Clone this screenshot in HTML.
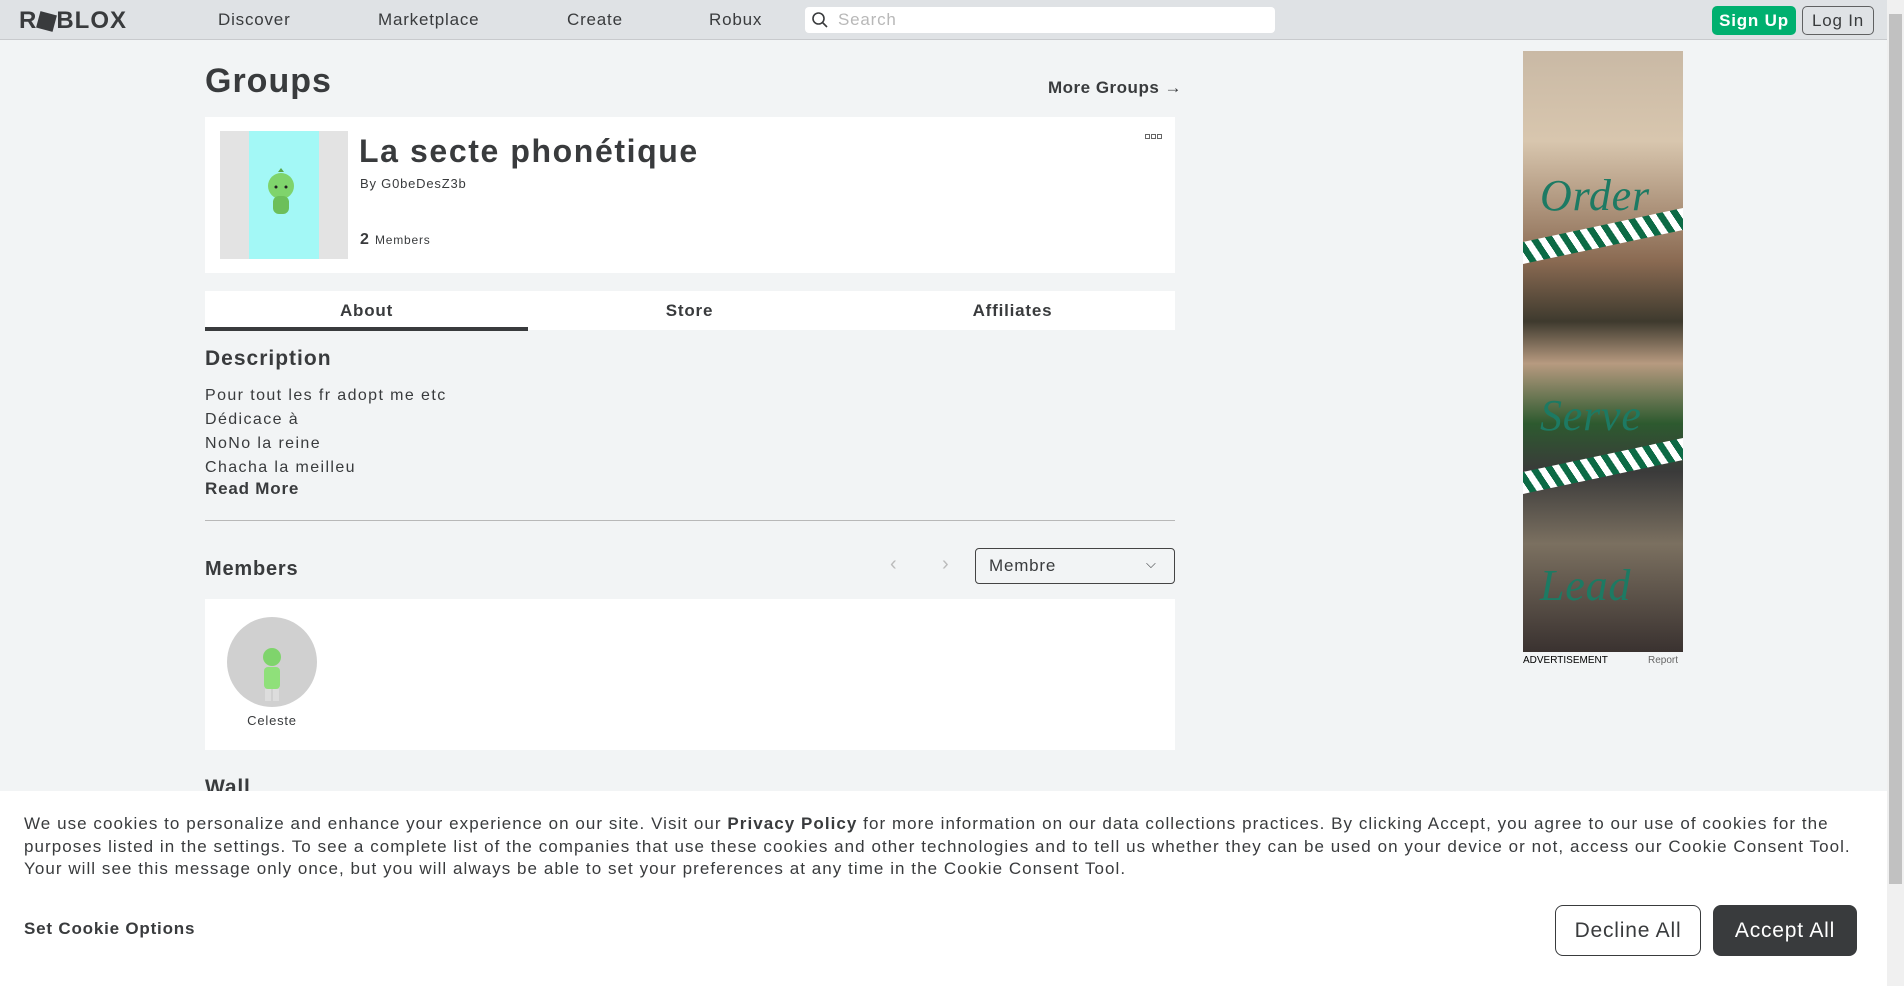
<!DOCTYPE html>
<html><head><meta charset="utf-8"><style>
*{box-sizing:border-box;margin:0;padding:0}
body{width:1904px;height:986px;overflow:hidden;background:#f2f4f5;font-family:"Liberation Sans",sans-serif;color:#393b3d;position:relative;letter-spacing:0.8px}
.a{position:absolute}
.hdr{left:0;top:0;width:1887px;height:40px;background:#dfe2e5;border-bottom:1px solid #c8cacd}
.nav{top:10px;font-size:17px;color:#393b3d}
.sb{left:1887px;top:0;width:17px;height:986px;background:#f0f0f0}
.card{background:#fff}
.t{white-space:nowrap}
</style></head><body>
<div class="a hdr"></div>
<div class="a t" style="left:19px;top:7px;font-size:24px;font-weight:bold;letter-spacing:1px;color:#393b3d">R<span style="display:inline-block;width:17px;height:17px;background:#393b3d;transform:rotate(15deg);vertical-align:-2px;margin:0 1px"></span>BLOX</div>
<div class="a nav t" style="left:218px">Discover</div>
<div class="a nav t" style="left:378px">Marketplace</div>
<div class="a nav t" style="left:567px">Create</div>
<div class="a nav t" style="left:709px">Robux</div>
<div class="a" style="left:805px;top:7px;width:470px;height:26px;background:#fff;border-radius:4px"></div>
<svg class="a" style="left:811px;top:11px" width="18" height="18" viewBox="0 0 18 18"><circle cx="7.5" cy="7.5" r="5.5" fill="none" stroke="#393b3d" stroke-width="1.6"/><path d="M11.5 11.5L16 16" stroke="#393b3d" stroke-width="1.6"/></svg>
<div class="a t" style="left:838px;top:10px;font-size:17px;color:#b8b8b8">Search</div>
<div class="a t" style="left:1712px;top:6px;width:84px;height:29px;background:#00b06f;border-radius:5px;color:#fff;font-size:17px;font-weight:bold;text-align:center;line-height:29px">Sign Up</div>
<div class="a t" style="left:1802px;top:6px;width:72px;height:29px;border:1px solid #606162;border-radius:5px;color:#393b3d;font-size:17px;text-align:center;line-height:27px">Log In</div>
<div class="a sb"></div>
<div class="a" style="left:1889px;top:14px;width:13px;height:870px;background:#c1c1c1"></div>

<div class="a t" style="left:205px;top:62px;font-size:34px;font-weight:bold;letter-spacing:1px">Groups</div>
<div class="a t" style="left:1048px;top:78px;font-size:17px;font-weight:bold;color:#393b3d;letter-spacing:0.5px">More Groups →</div>
<div class="a card" style="left:205px;top:117px;width:970px;height:156px"></div>
<div class="a" style="left:220px;top:131px;width:128px;height:128px;background:#e3e3e3"></div>
<div class="a" style="left:249px;top:131px;width:70px;height:128px;background:#a3f8f6"></div>
<svg class="a" style="left:262px;top:168px" width="38" height="50" viewBox="0 0 38 50"><ellipse cx="19" cy="18" rx="13" ry="13" fill="#7fd46c"/><rect x="11" y="28" width="16" height="18" rx="6" fill="#6cbf5a"/><circle cx="14" cy="19" r="1.5" fill="#222"/><circle cx="24" cy="19" r="1.5" fill="#222"/><path d="M16 4l3-4 3 4" fill="#5aa84a"/></svg>
<div class="a t" style="left:359px;top:133px;font-size:32px;font-weight:bold;letter-spacing:1.6px">La secte phonétique</div>
<div class="a t" style="left:360px;top:176px;font-size:13px">By G0beDesZ3b</div>
<div class="a t" style="left:360px;top:231px;font-size:16px;font-weight:bold">2 <span style="font-size:12px;font-weight:normal">Members</span></div>
<svg class="a" style="left:1145px;top:134px" width="18" height="6"><rect x="0.5" y="0.5" width="4" height="4" fill="none" stroke="#666"/><rect x="6.5" y="0.5" width="4" height="4" fill="none" stroke="#666"/><rect x="12.5" y="0.5" width="4" height="4" fill="none" stroke="#666"/></svg>

<div class="a card" style="left:205px;top:291px;width:970px;height:39px"></div>
<div class="a" style="left:205px;top:327px;width:323px;height:4px;background:#393b3d"></div>
<div class="a t" style="left:205px;top:301px;width:323px;text-align:center;font-size:17px;font-weight:bold">About</div>
<div class="a t" style="left:528px;top:301px;width:323px;text-align:center;font-size:17px;font-weight:bold">Store</div>
<div class="a t" style="left:851px;top:301px;width:323px;text-align:center;font-size:17px;font-weight:bold">Affiliates</div>

<div class="a t" style="left:205px;top:347px;font-size:21px;font-weight:bold;letter-spacing:1px">Description</div>
<div class="a" style="left:205px;top:384px;font-size:16px;line-height:24px;letter-spacing:1.4px">Pour tout les fr adopt me etc<br>Dédicace à<br>NoNo la reine<br>Chacha la meilleu</div>
<div class="a t" style="left:205px;top:479px;font-size:17px;font-weight:bold">Read More</div>
<div class="a" style="left:205px;top:520px;width:970px;height:1px;background:#b8b8b8"></div>

<div class="a t" style="left:205px;top:558px;font-size:20px;font-weight:bold">Members</div>
<div class="a t" style="left:890px;top:553px;font-size:20px;color:#bbb">‹</div>
<div class="a t" style="left:942px;top:553px;font-size:20px;color:#bbb">›</div>
<div class="a" style="left:975px;top:548px;width:200px;height:36px;border:1px solid #444;border-radius:4px"></div>
<div class="a t" style="left:989px;top:556px;font-size:17px">Membre</div>
<div class="a t" style="left:1146px;top:556px;font-size:13px">⌵</div>
<div class="a card" style="left:205px;top:599px;width:970px;height:151px"></div>
<div class="a" style="left:227px;top:617px;width:90px;height:90px;border-radius:50%;background:#d0d0d0"></div>
<svg class="a" style="left:255px;top:645px" width="34" height="58" viewBox="0 0 34 58"><ellipse cx="17" cy="12" rx="9" ry="9" fill="#7fd46c"/><rect x="9" y="22" width="16" height="22" rx="4" fill="#8fe07a"/><rect x="10" y="44" width="6" height="12" fill="#ddd"/><rect x="18" y="44" width="6" height="12" fill="#ddd"/></svg>
<div class="a t" style="left:227px;top:713px;width:90px;text-align:center;font-size:13px">Celeste</div>
<div class="a t" style="left:205px;top:776px;font-size:21px;font-weight:bold">Wall</div>

<div class="a" style="left:1523px;top:51px;width:160px;height:601px;background:linear-gradient(180deg,#c9b9a5 0%,#d8c6ae 15%,#8a6a52 35%,#3e3a2e 45%,#b79a80 52%,#2d5a2f 62%,#3a3a3a 70%,#7b7060 82%,#3a3230 100%)"></div>
<div class="a t" style="left:1540px;top:170px;font-size:44px;font-style:italic;color:#1d7a63;font-family:'Liberation Serif',serif">Order</div>
<div class="a t" style="left:1540px;top:390px;font-size:44px;font-style:italic;color:#1d7a63;font-family:'Liberation Serif',serif">Serve</div>
<div class="a t" style="left:1540px;top:560px;font-size:44px;font-style:italic;color:#1d7a63;font-family:'Liberation Serif',serif">Lead</div>
<div class="a" style="left:1523px;top:225px;width:160px;height:22px;background:repeating-linear-gradient(60deg,#fff 0 6px,#0c6a45 6px 12px);transform:skewY(-12deg)"></div>
<div class="a" style="left:1523px;top:455px;width:160px;height:22px;background:repeating-linear-gradient(60deg,#fff 0 6px,#0c6a45 6px 12px);transform:skewY(-12deg)"></div>
<div class="a t" style="left:1523px;top:655px;font-size:10px;color:#000;letter-spacing:0">ADVERTISEMENT</div>
<div class="a t" style="left:1648px;top:655px;font-size:10px;color:#666;letter-spacing:0">Report</div>

<div class="a" style="left:0;top:791px;width:1887px;height:195px;background:#fff"></div>
<div class="a" style="left:24px;top:813px;width:1840px;font-size:17px;line-height:22.5px;color:#393b3d;letter-spacing:1.05px">We use cookies to personalize and enhance your experience on our site. Visit our <b>Privacy Policy</b> for more information on our data collections practices. By clicking Accept, you agree to our use of cookies for the purposes listed in the settings. To see a complete list of the companies that use these cookies and other technologies and to tell us whether they can be used on your device or not, access our Cookie Consent Tool. Your will see this message only once, but you will always be able to set your preferences at any time in the Cookie Consent Tool.</div>
<div class="a t" style="left:24px;top:919px;font-size:17px;font-weight:bold">Set Cookie Options</div>
<div class="a t" style="left:1555px;top:905px;width:146px;height:51px;border:1px solid #393b3d;border-radius:8px;text-align:center;line-height:49px;font-size:21px;color:#393b3d">Decline All</div>
<div class="a t" style="left:1713px;top:905px;width:144px;height:51px;background:#393b3d;border-radius:8px;text-align:center;line-height:51px;font-size:21px;color:#fff">Accept All</div>
</body></html>
